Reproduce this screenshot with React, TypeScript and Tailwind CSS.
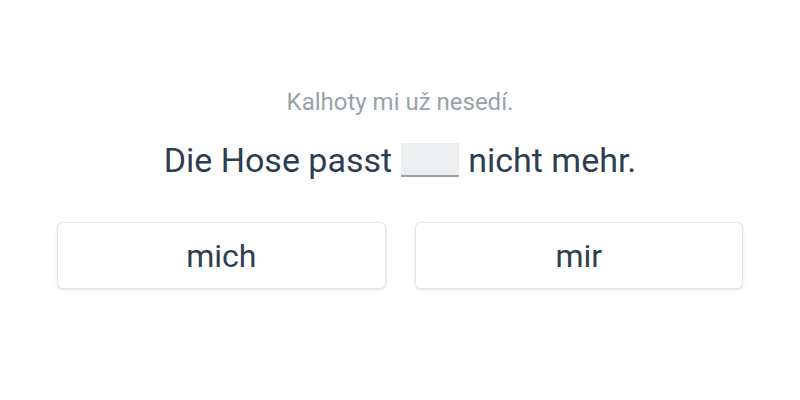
export default function App() {
  return (
    <div className="w-[800px] h-[400px] bg-white font-['Roboto',sans-serif] flex flex-col items-center pt-[88px] px-[57px]">
      <p className="text-[24px] leading-[28px] text-[#95a5a6]">Kalhoty mi už nesedí.</p>
      <p className="mt-[24px] text-[34px] leading-[40px] text-[#2c3e50] flex items-center">
        <span>Die Hose passt</span>
        <span className="mx-[9px] inline-block w-[58px] h-[34px] bg-[#eceef0] border-b-[2px] border-[#95a5a6]" />
        <span>nicht mehr.</span>
      </p>
      <div className="mt-[42px] w-full grid grid-cols-2 gap-[29px]">
        {['mich', 'mir'].map((w) => (
          <button
            key={w}
            className="h-[67px] rounded-[6px] border border-[#e3e5e7] bg-white shadow-[0_1px_3px_rgba(0,0,0,0.12)] text-[32px] text-[#2c3e50]"
          >
            {w}
          </button>
        ))}
      </div>
    </div>
  );
}
